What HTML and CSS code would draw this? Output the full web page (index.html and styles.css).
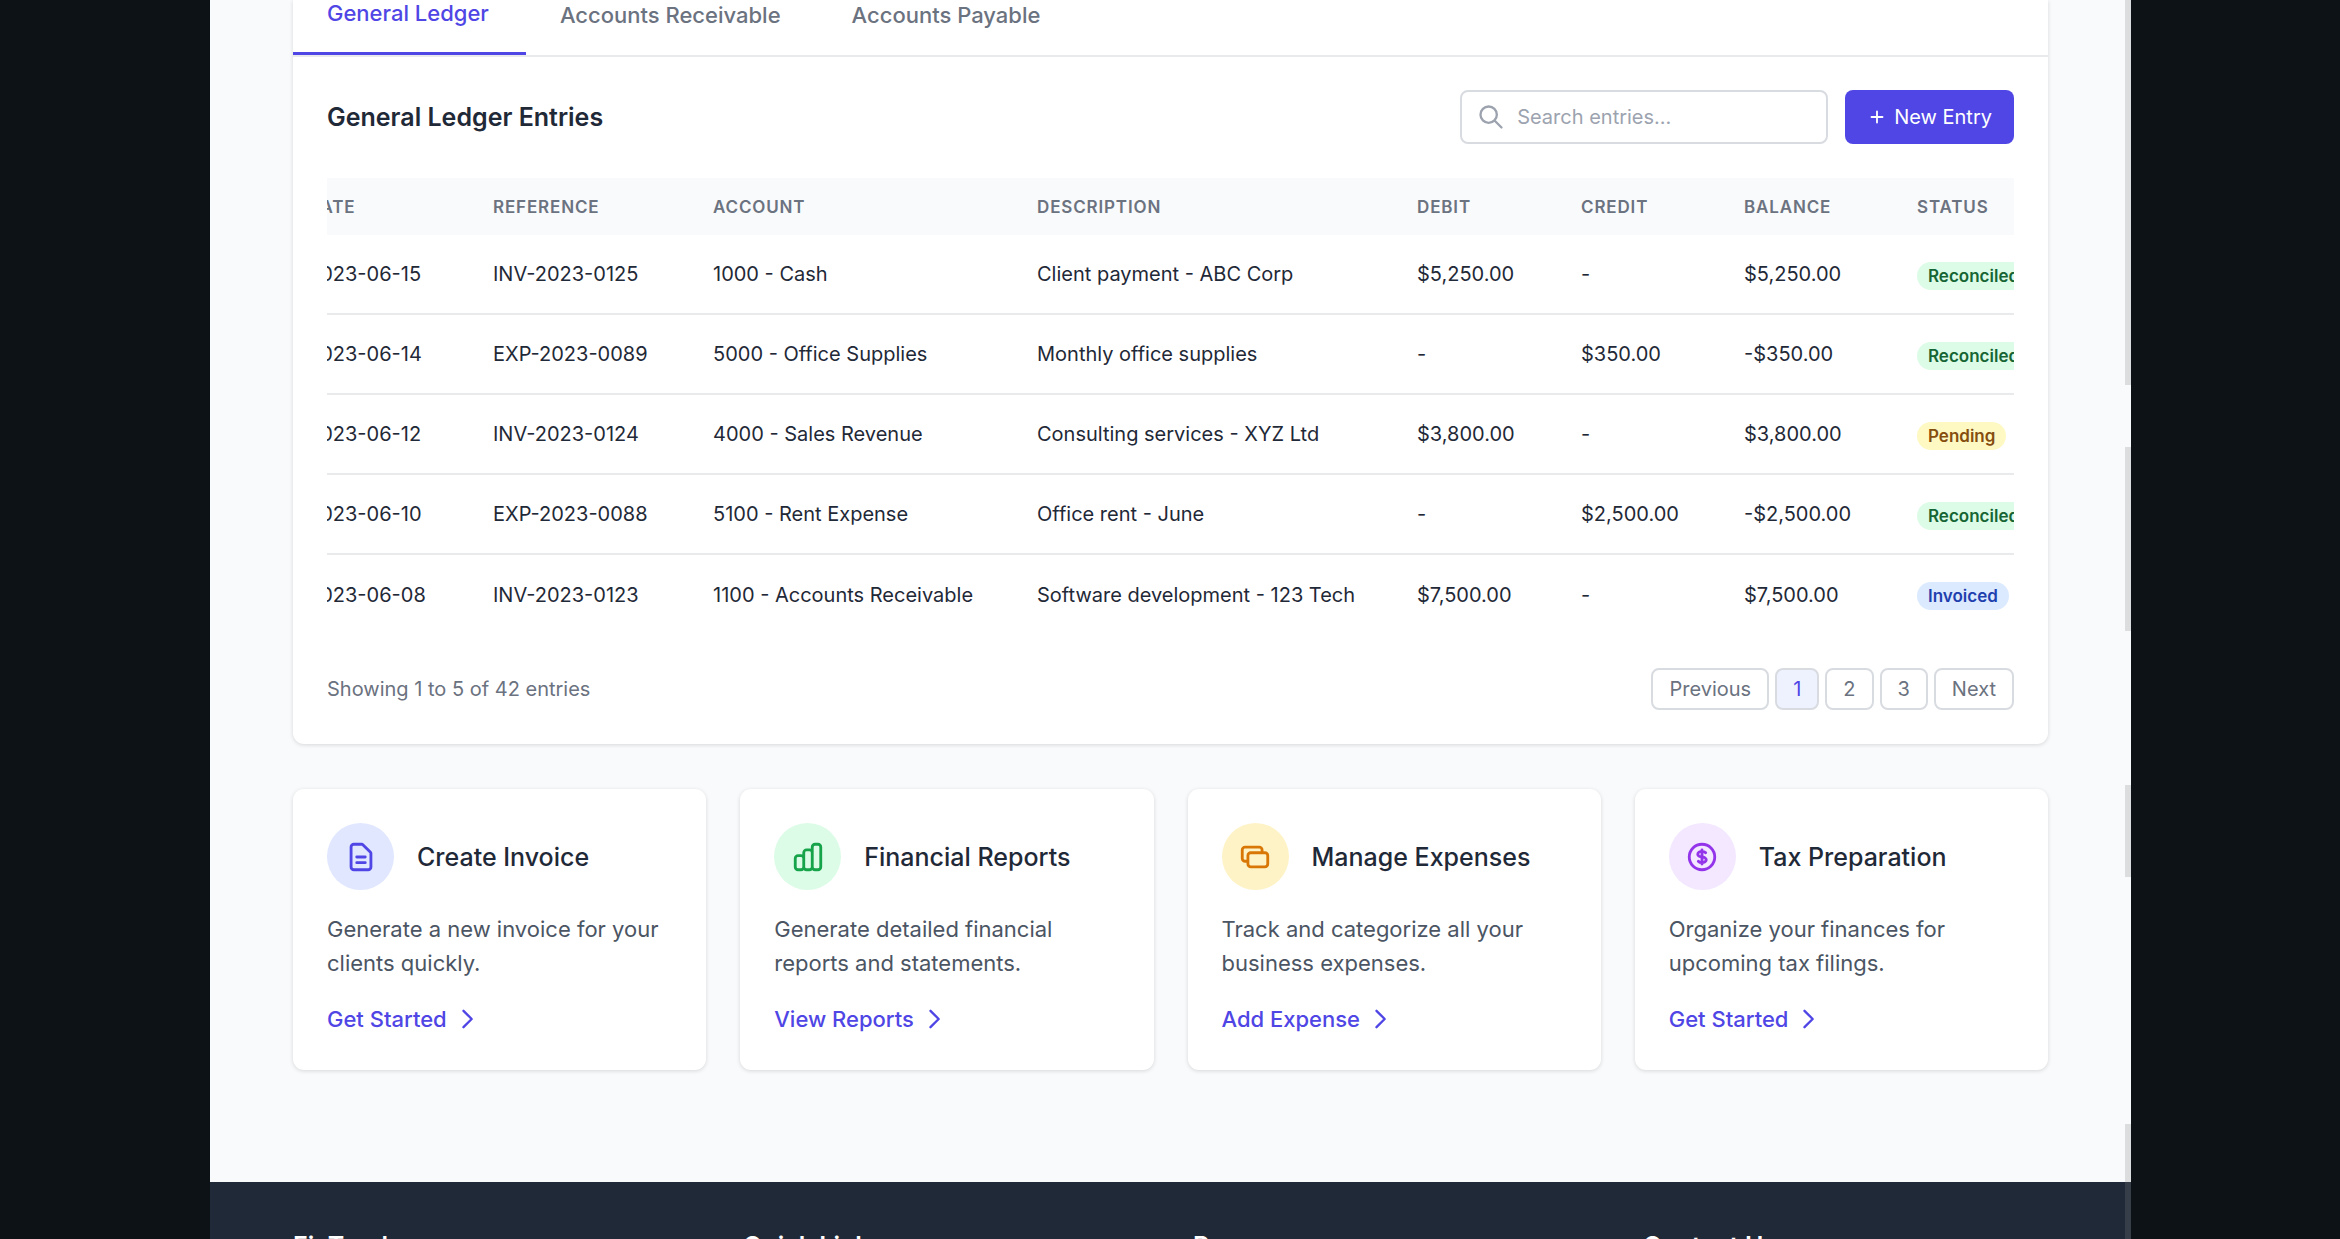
FILE: index.html
```html
<!DOCTYPE html>
<html lang="en">
<head>
<meta charset="utf-8">
<title>General Ledger</title>
<link rel="stylesheet" href="styles.css">
</head>
<body>
<div class="page">
  <main class="container">
    <section class="panel">
      <nav class="tabs">
        <button class="tab tab-active" type="button">General Ledger</button>
        <button class="tab" type="button">Accounts Receivable</button>
        <button class="tab" type="button">Accounts Payable</button>
      </nav>
      <div class="panel-body">
        <header class="toolbar">
          <h2 class="panel-title">General Ledger Entries</h2>
          <div class="tools">
            <label class="search">
              <svg class="icon-md" viewBox="0 0 24 24"><path d="M21 21l-6-6m2-5a7 7 0 11-14 0 7 7 0 0114 0z"/></svg>
              <input class="search-input" type="text" placeholder="Search entries..." aria-label="Search entries">
            </label>
            <button class="new-entry" type="button">
              <svg class="icon-sm" viewBox="0 0 24 24"><path d="M12 6v12M6 12h12"/></svg>
              New Entry
            </button>
          </div>
        </header>
        <div class="table-scroll">
          <table class="ledger">
            <colgroup>
              <col class="col-date"><col class="col-ref"><col class="col-account"><col class="col-desc">
              <col class="col-debit"><col class="col-credit"><col class="col-balance"><col class="col-status">
            </colgroup>
            <thead>
              <tr><th>Date</th><th>Reference</th><th>Account</th><th>Description</th><th>Debit</th><th>Credit</th><th>Balance</th><th>Status</th></tr>
            </thead>
            <tbody>
              <tr><td>2023-06-15</td><td>INV-2023-0125</td><td>1000 - Cash</td><td>Client payment - ABC Corp</td><td>$5,250.00</td><td>-</td><td>$5,250.00</td><td><span class="badge badge-green">Reconciled</span></td></tr>
              <tr><td>2023-06-14</td><td>EXP-2023-0089</td><td>5000 - Office Supplies</td><td>Monthly office supplies</td><td>-</td><td>$350.00</td><td>-$350.00</td><td><span class="badge badge-green">Reconciled</span></td></tr>
              <tr><td>2023-06-12</td><td>INV-2023-0124</td><td>4000 - Sales Revenue</td><td>Consulting services - XYZ Ltd</td><td>$3,800.00</td><td>-</td><td>$3,800.00</td><td><span class="badge badge-yellow">Pending</span></td></tr>
              <tr><td>2023-06-10</td><td>EXP-2023-0088</td><td>5100 - Rent Expense</td><td>Office rent - June</td><td>-</td><td>$2,500.00</td><td>-$2,500.00</td><td><span class="badge badge-green">Reconciled</span></td></tr>
              <tr><td>2023-06-08</td><td>INV-2023-0123</td><td>1100 - Accounts Receivable</td><td>Software development - 123 Tech</td><td>$7,500.00</td><td>-</td><td>$7,500.00</td><td><span class="badge badge-blue">Invoiced</span></td></tr>
            </tbody>
          </table>
        </div>
        <footer class="pager">
          <p class="pager-text">Showing 1 to 5 of 42 entries</p>
          <div class="pager-buttons">
            <button class="page-btn" type="button">Previous</button>
            <button class="page-btn page-current" type="button">1</button>
            <button class="page-btn" type="button">2</button>
            <button class="page-btn" type="button">3</button>
            <button class="page-btn" type="button">Next</button>
          </div>
        </footer>
      </div>
    </section>

    <section class="cards">
      <article class="card">
        <div class="card-head">
          <span class="card-icon icon-indigo"><svg class="icon-lg" viewBox="0 0 24 24"><path d="M9 12h6m-6 4h6m2 5H7a2 2 0 01-2-2V5a2 2 0 012-2h5.586a1 1 0 01.707.293l5.414 5.414a1 1 0 01.293.707V19a2 2 0 01-2 2z"/></svg></span>
          <h3 class="card-title">Create Invoice</h3>
        </div>
        <p class="card-text">Generate a new invoice for your clients quickly.</p>
        <a class="card-link" href="#">Get Started <svg class="icon-md" viewBox="0 0 24 24"><path d="M9 5l7 7-7 7"/></svg></a>
      </article>
      <article class="card">
        <div class="card-head">
          <span class="card-icon icon-green"><svg class="icon-lg" viewBox="0 0 24 24"><path d="M9 19v-6a2 2 0 00-2-2H5a2 2 0 00-2 2v6a2 2 0 002 2h2a2 2 0 002-2zm0 0V9a2 2 0 012-2h2a2 2 0 012 2v10m-6 0a2 2 0 002 2h2a2 2 0 002-2m0 0V5a2 2 0 012-2h2a2 2 0 012 2v14a2 2 0 01-2 2h-2a2 2 0 01-2-2z"/></svg></span>
          <h3 class="card-title">Financial Reports</h3>
        </div>
        <p class="card-text">Generate detailed financial reports and statements.</p>
        <a class="card-link" href="#">View Reports <svg class="icon-md" viewBox="0 0 24 24"><path d="M9 5l7 7-7 7"/></svg></a>
      </article>
      <article class="card">
        <div class="card-head">
          <span class="card-icon icon-amber"><svg class="icon-lg" viewBox="0 0 24 24"><path d="M17 9V7a2 2 0 00-2-2H5a2 2 0 00-2 2v6a2 2 0 002 2h2m2 4h10a2 2 0 002-2v-6a2 2 0 00-2-2H9a2 2 0 00-2 2v6a2 2 0 002 2z"/></svg></span>
          <h3 class="card-title">Manage Expenses</h3>
        </div>
        <p class="card-text">Track and categorize all your business expenses.</p>
        <a class="card-link" href="#">Add Expense <svg class="icon-md" viewBox="0 0 24 24"><path d="M9 5l7 7-7 7"/></svg></a>
      </article>
      <article class="card">
        <div class="card-head">
          <span class="card-icon icon-purple"><svg class="icon-lg" viewBox="0 0 24 24"><path d="M12 8c-1.657 0-3 .895-3 2s1.343 2 3 2 3 .895 3 2-1.343 2-3 2m0-8c1.11 0 2.08.402 2.599 1M12 8V7m0 1v8m0 0v1m0-1c-1.11 0-2.08-.402-2.599-1M21 12a9 9 0 11-18 0 9 9 0 0118 0z"/></svg></span>
          <h3 class="card-title">Tax Preparation</h3>
        </div>
        <p class="card-text">Organize your finances for upcoming tax filings.</p>
        <a class="card-link" href="#">Get Started <svg class="icon-md" viewBox="0 0 24 24"><path d="M9 5l7 7-7 7"/></svg></a>
      </article>
    </section>
  </main>

  <footer class="site-footer">
    <div class="footer-grid">
      <h3 class="footer-title">FinTrack</h3>
      <h3 class="footer-title">Quick Links</h3>
      <h3 class="footer-title">Resources</h3>
      <h3 class="footer-title">Contact Us</h3>
    </div>
  </footer>

  <div class="rail" aria-hidden="true"></div>
</div>
</body>
</html>
```
FILE: styles.css
```css
* { box-sizing: border-box; }

body {
  margin: 0;
  height: 100vh;
  overflow: hidden;
  background: #0d1216;
  color: #1f2937;
  font-family: Inter, "Liberation Sans", sans-serif;
  font-size: 22px;
  line-height: 34px;
}

h2, h3, p { margin: 0; }
button, input { font: inherit; color: inherit; }
button { background: none; border: 0; padding: 0; }

svg {
  flex: none;
  fill: none;
  stroke: currentColor;
  stroke-width: 2;
  stroke-linecap: round;
  stroke-linejoin: round;
}
.icon-sm { width: 22px; height: 22px; }
.icon-md { width: 28px; height: 28px; }
.icon-lg { width: 34px; height: 34px; }

.page {
  position: relative;
  margin: 0 209px 0 210px;
  background: #f9fafb;
}

.container { padding: 0 83px 112px; }

/* Ledger panel */
.panel {
  background: #fff;
  border-radius: 0 0 11px 11px;
  box-shadow: 0 1px 4px rgba(0, 0, 0, 0.14);
}
.tabs {
  display: flex;
  align-items: flex-start;
  height: 57px;
  border-bottom: 2px solid #e9eaec;
}
.tab {
  padding: 0 37px 25px 34px;
  line-height: 30px;
  font-weight: 500;
  color: #6b7280;
}
.tab-active {
  padding-bottom: 26px;
  line-height: 26px;
  color: #4f46e5;
  border-bottom: 3px solid #4f46e5;
}
.panel-body { padding: 33px 34px 34px; }

.toolbar {
  display: flex;
  align-items: center;
  justify-content: space-between;
  margin-bottom: 34px;
}
.panel-title { font-size: 25px; font-weight: 600; }
.tools { display: flex; gap: 17px; font-size: 20px; }
.search {
  display: flex;
  align-items: center;
  gap: 12px;
  width: 368px;
  height: 54px;
  padding: 0 15px;
  border: 2px solid #d8dbe0;
  border-radius: 8px;
  color: #9ca3af;
}
.search-input {
  flex: 1;
  min-width: 0;
  padding: 0;
  border: 0;
  outline: 0;
  background: none;
}
.search-input::placeholder { color: #9ca3af; opacity: 1; }
.new-entry {
  display: flex;
  align-items: center;
  gap: 6px;
  padding: 0 22px 0 21px;
  border-radius: 8px;
  background: #4f46e5;
  color: #fff;
}

.table-scroll { overflow: hidden; }
.ledger {
  width: 1787px;
  margin-left: -53px;
  table-layout: fixed;
  border-collapse: separate;
  border-spacing: 0;
  font-size: 20px;
  white-space: nowrap;
}
.col-date { width: 185px; }
.col-ref { width: 220px; }
.col-account { width: 324px; }
.col-desc { width: 380px; }
.col-debit { width: 164px; }
.col-credit { width: 163px; }
.col-balance { width: 173px; }
.col-status { width: 178px; }
.ledger th {
  height: 57px;
  padding: 0 34px;
  background: #f9fafb;
  color: #6b7280;
  font-size: 17px;
  font-weight: 600;
  letter-spacing: 0.05em;
  text-align: left;
  text-transform: uppercase;
}
.ledger td {
  height: 80px;
  padding: 0 34px;
  border-bottom: 2px solid #e9eaec;
}
.ledger tr:last-child td { height: 79px; border-bottom: 0; }
.badge {
  display: inline-block;
  padding: 0 11px;
  border-radius: 14px;
  font-size: 17px;
  font-weight: 600;
  line-height: 28px;
  vertical-align: middle;
}
.badge-green { background: #dcfce7; color: #166534; }
.badge-yellow { background: #fef9c3; color: #854d0e; }
.badge-blue { background: #dbeafe; color: #1e40af; }

.pager {
  display: flex;
  align-items: center;
  justify-content: space-between;
  padding-top: 34px;
  font-size: 20px;
  color: #6b7280;
}
.pager-buttons { display: flex; gap: 6px; }
.page-btn {
  height: 42px;
  padding: 0 16px;
  border: 2px solid #d8dbe0;
  border-radius: 8px;
}
.page-current { background: #eef2ff; color: #4f46e5; }

/* Shortcut cards */
.cards {
  display: grid;
  grid-template-columns: repeat(4, 1fr);
  gap: 34px;
  margin-top: 45px;
}
.card {
  padding: 34px;
  background: #fff;
  border-radius: 11px;
  box-shadow: 0 1px 4px rgba(0, 0, 0, 0.14);
}
.card-head { display: flex; align-items: center; gap: 23px; margin-bottom: 22px; }
.card-icon {
  display: flex;
  align-items: center;
  justify-content: center;
  width: 67px;
  height: 67px;
  border-radius: 50%;
}
.icon-indigo { background: #e0e7ff; color: #4f46e5; }
.icon-green { background: #dcfce7; color: #16a34a; }
.icon-amber { background: #fef3c7; color: #d97706; }
.icon-purple { background: #f3e8ff; color: #9333ea; }
.card-title { font-size: 25px; font-weight: 500; }
.card-text { margin-bottom: 22px; color: #4b5563; }
.card-link {
  display: inline-flex;
  align-items: center;
  gap: 6px;
  color: #4f46e5;
  font-weight: 500;
  text-decoration: none;
  vertical-align: top;
}

/* Site footer */
.site-footer {
  padding: 45px 83px;
  background: #1f2937;
  color: #fff;
}
.footer-grid {
  display: grid;
  grid-template-columns: repeat(4, 1fr);
  gap: 45px;
}
.footer-title { font-size: 25px; line-height: 39px; font-weight: 600; }

/* Segmented scroll rail over the right edge */
.rail {
  position: absolute;
  top: 0;
  right: 0;
  width: 6px;
  height: 100vh;
  background: linear-gradient(
    rgba(128, 128, 128, 0.24) 385px, transparent 385px 447px,
    rgba(128, 128, 128, 0.24) 447px 631px, transparent 631px 785px,
    rgba(128, 128, 128, 0.24) 785px 877px, transparent 877px 1124px,
    rgba(128, 128, 128, 0.24) 1124px);
}
```
